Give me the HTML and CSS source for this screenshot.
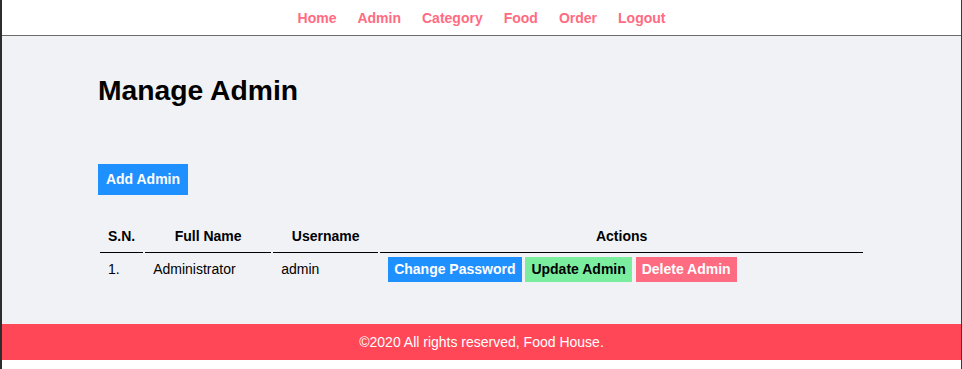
FILE: index.html
```html
<!DOCTYPE html>
<html lang="en">
<head>
    <meta charset="UTF-8">
    <meta name="viewport" content="width=device-width, initial-scale=1.0">
    <title>Food House - Manage Admin</title>
    <link rel="stylesheet" href="styles.css">
</head>
<body>

<!-- Menu -->
<div class="menu">
    <a href="#">Home</a>
    <a href="#">Admin</a>
    <a href="#">Category</a>
    <a href="#">Food</a>
    <a href="#">Order</a>
    <a href="#">Logout</a>
</div>

<!-- Main content -->
<div class="main-content">
    <div class="wrapper">
        <h1>Manage Admin</h1>

        <div class="add-row">
            <a href="#" class="btn-primary btn-add">Add Admin</a>
        </div>

        <table class="tbl-full">
            <tr>
                <th class="col-sn">S.N.</th>
                <th class="col-name">Full Name</th>
                <th class="col-user">Username</th>
                <th>Actions</th>
            </tr>
            <tr>
                <td>1.</td>
                <td>Administrator</td>
                <td>admin</td>
                <td>
                    <a href="#" class="btn-primary">Change Password</a>
                    <a href="#" class="btn-secondary">Update Admin</a>
                    <a href="#" class="btn-danger">Delete Admin</a>
                </td>
            </tr>
        </table>
    </div>
</div>

<!-- Footer -->
<div class="footer">
    <p>&copy;2020 All rights reserved, Food House.</p>
</div>

</body>
</html>
```

FILE: styles.css
```css
body {
    margin: 0;
    font-family: Arial, "Liberation Sans", sans-serif;
    font-size: 14px;
    color: black;
    background-color: white;
    border-left: 2px solid #2d2d2d;
    border-right: 1px solid #3a3a3a;
    min-height: 369px;
    box-sizing: border-box;
}
a {
    text-decoration: none;
}
.menu {
    display: flex;
    justify-content: center;
    gap: 21px;
    padding: 10px 0 9px;
    border-bottom: 1px solid #6b6b6b;
}
.menu a {
    color: #ff6b81;
    font-weight: bold;
}
.main-content {
    background-color: #f1f2f6;
    padding: 38px 0 39px;
}
.wrapper {
    width: 80%;
    margin: 0 auto;
}
h1 {
    margin: 0 0 58px;
    font-size: 28.3px;
    line-height: 32px;
}
.add-row {
    margin-bottom: 23px;
}
.tbl-full {
    width: 100%;
}
.tbl-full th {
    padding: 8px;
    border-bottom: 1px solid black;
}
.tbl-full td {
    padding: 6px 8px;
}
.col-sn { width: 27px; }
.col-name { width: 110px; }
.col-user { width: 89px; }
.btn-primary,
.btn-secondary,
.btn-danger {
    font-weight: bold;
    padding: 4px 6px 5px;
}
.btn-primary {
    background-color: #1e90ff;
    color: white;
}
.btn-secondary {
    background-color: #7bed9f;
    color: black;
}
.btn-danger {
    background-color: #ff6b81;
    color: white;
}
.add-row .btn-add {
    display: inline-block;
    padding: 7px 8px;
    line-height: 17px;
}
.footer {
    background-color: #ff4757;
    color: white;
    text-align: center;
    padding: 10px 0;
}
.footer p {
    margin: 0;
    line-height: 16px;
}
```
